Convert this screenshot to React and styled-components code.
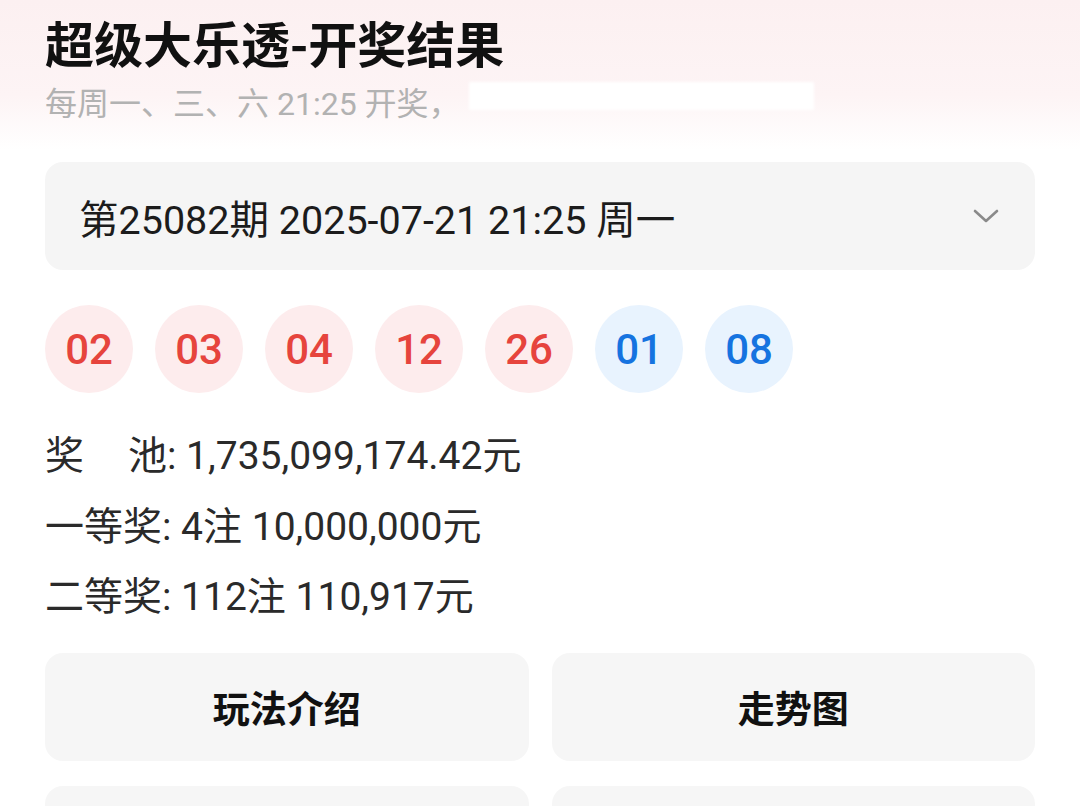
import React from "react";
import styled, { createGlobalStyle } from "styled-components";

const GlobalStyle = createGlobalStyle`
   * { box-sizing: border-box; }
   body {
      margin: 0;
      background: #fff;
      font-family: Roboto, "Noto Sans CJK SC", sans-serif;
      color: #222;
   }
`;

const Page = styled.div`
   width: 1080px;
   height: 806px;
   overflow: hidden;
   background: linear-gradient(#fcf0f1 0px, #fdf4f5 95px, #fff 150px);
`;

const Header = styled.header`
   padding: 11px 45px 0;
`;

const Title = styled.h1`
   margin: 0;
   font-size: 49px;
   line-height: 62px;
   font-weight: 700;
   color: #111;
   font-family: "Noto Sans CJK SC", sans-serif;
`;

const Subtitle = styled.div`
   display: flex;
   align-items: center;
   height: 60px;
   margin-top: -2px;
   font-size: 32px;
   color: #b2b2b2;
   white-space: nowrap;
`;

const Mask = styled.span`
   display: inline-block;
   width: 345px;
   height: 28px;
   margin: -10px 0 0 8px;
   background: #fff;
   filter: blur(1.5px);
`;

const Body = styled.main`
   padding: 31px 45px 0;
`;

const Picker = styled.div`
   height: 108px;
   border-radius: 18px;
   background: #f5f5f5;
   display: flex;
   align-items: center;
   justify-content: space-between;
   padding: 0 36px 0 34px;
   font-size: 39.5px;
   color: #1c1c1c;
`;

const Balls = styled.div`
   display: flex;
   gap: 22px;
   margin-top: 35px;
`;

const Ball = styled.div`
   width: 88px;
   height: 88px;
   border-radius: 50%;
   display: flex;
   align-items: center;
   justify-content: center;
   font-size: 42px;
   font-weight: 500;
   background: ${(p) => (p.$blue ? "#e8f3fe" : "#fdeced")};
   color: ${(p) => (p.$blue ? "#1673e0" : "#e6443d")};
`;

const Info = styled.div`
   margin-top: 24px;
   display: flex;
   flex-direction: column;
`;

const Line = styled.div`
   height: 70.5px;
   display: flex;
   align-items: center;
   font-size: 39px;
   color: #2a2a2a;
   white-space: pre;
`;

const Label = styled.span`
   display: inline-flex;
   justify-content: space-between;
   width: 122px;
`;

const Actions = styled.div`
   display: grid;
   grid-template-columns: 1fr 1fr;
   gap: 25px 23px;
   margin-top: 24px;
`;

const Action = styled.button`
   height: 108px;
   border: none;
   border-radius: 18px;
   background: #f6f6f6;
   font-family: "Noto Sans CJK SC", sans-serif;
   font-size: 37px;
   font-weight: 700;
   color: #111;
`;

const Chevron = () => (
   <svg width="26" height="16" viewBox="0 0 26 16" fill="none">
      <path d="M2 3l11 10 11-10" stroke="#8a8a8a" strokeWidth="2.6" strokeLinecap="round" strokeLinejoin="round" />
   </svg>
);

const front = ["02", "03", "04", "12", "26"];
const back = ["01", "08"];

const App = () => {
   return (
      <>
         <GlobalStyle />
         <Page>
            <Header>
               <Title>超级大乐透-开奖结果</Title>
               <Subtitle>
                  每周一、三、六 21:25 开奖，
                  <Mask />
               </Subtitle>
            </Header>
            <Body>
               <Picker>
                  <span>第25082期 2025-07-21 21:25 周一</span>
                  <Chevron />
               </Picker>
               <Balls>
                  {front.map((n) => (
                     <Ball key={"f" + n}>{n}</Ball>
                  ))}
                  {back.map((n) => (
                     <Ball key={"b" + n} $blue>
                        {n}
                     </Ball>
                  ))}
               </Balls>
               <Info>
                  <Line>
                     <Label>
                        <span>奖</span>
                        <span>池</span>
                     </Label>
                     : 1,735,099,174.42元
                  </Line>
                  <Line>一等奖: 4注 10,000,000元</Line>
                  <Line>二等奖: 112注 110,917元</Line>
               </Info>
               <Actions>
                  <Action>玩法介绍</Action>
                  <Action>走势图</Action>
                  <Action />
                  <Action />
               </Actions>
            </Body>
         </Page>
      </>
   );
};

export default App;
